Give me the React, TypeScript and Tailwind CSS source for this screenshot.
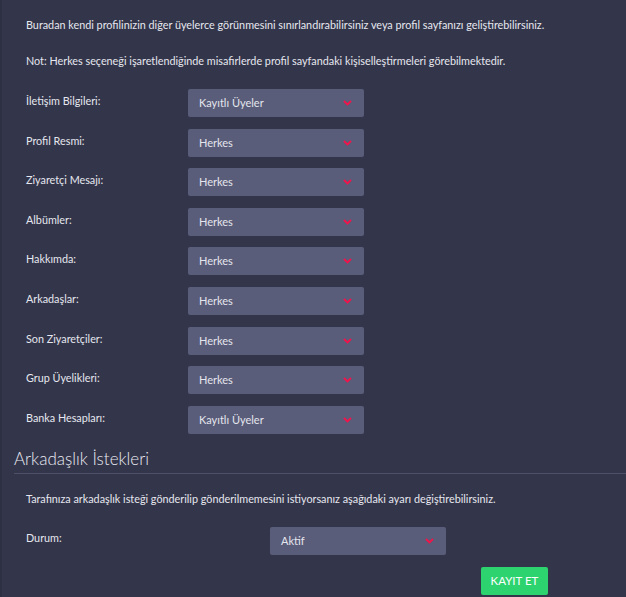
import { useState } from 'react';

const privacyRows = [
  { label: 'İletişim Bilgileri:', value: 'Kayıtlı Üyeler' },
  { label: 'Profil Resmi:', value: 'Herkes' },
  { label: 'Ziyaretçi Mesajı:', value: 'Herkes' },
  { label: 'Albümler:', value: 'Herkes' },
  { label: 'Hakkımda:', value: 'Herkes' },
  { label: 'Arkadaşlar:', value: 'Herkes' },
  { label: 'Son Ziyaretçiler:', value: 'Herkes' },
  { label: 'Grup Üyelikleri:', value: 'Herkes' },
  { label: 'Banka Hesapları:', value: 'Kayıtlı Üyeler' },
];

function Chevron() {
  return (
    <svg width="9" height="6" viewBox="0 0 9 6" className="shrink-0">
      <polyline points="1,1 4.5,4.5 8,1" fill="none" stroke="#f2134a" strokeWidth="1.8" />
    </svg>
  );
}

function SelectBox({ value }: { value: string }) {
  return (
    <button
      type="button"
      className="flex h-[28px] w-[176px] items-center justify-between rounded-[2px] bg-[#5a5d79] pl-[11px] pr-[12px] text-[11px] text-[#e4e5ee]"
    >
      <span>{value}</span>
      <Chevron />
    </button>
  );
}

export default function App() {
  const [saved, setSaved] = useState(false);

  return (
    <div
      className="min-h-screen border-l-2 border-[#2d2f42] bg-[#33354a] text-[10.8px] leading-[16px] text-[#e6e7ef]"
      style={{ fontFamily: 'Lato, "Open Sans", sans-serif' }}
    >
      <div className="pl-[24px] pt-[17px]">
        <p>
          Buradan kendi profilinizin diğer üyelerce görünmesini sınırlandırabilirsiniz veya profil sayfanızı geliştirebilirsiniz.
        </p>
        <p className="mt-[20px]">
          Not: Herkes seçeneği işaretlendiğinde misafirlerde profil sayfandaki kişiselleştirmeleri görebilmektedir.
        </p>

        <div className="mt-[20px] flex flex-col gap-[11.6px]">
          {privacyRows.map((row) => (
            <div key={row.label} className="flex items-start">
              <span className="w-[162px] pt-[4px]">{row.label}</span>
              <SelectBox value={row.value} />
            </div>
          ))}
        </div>
      </div>

      <div className="ml-[12px] mt-[13px] border-b border-[#4e5068] pb-[2px]">
        <h2 className="text-[17px] font-light leading-[24px] text-[#e9eaf2]">Arkadaşlık İstekleri</h2>
      </div>

      <div className="pl-[24px]">
        <p className="mt-[17px]">
          Tarafınıza arkadaşlık isteği gönderilip gönderilmemesini istiyorsanız aşağıdaki ayarı değiştirebilirsiniz.
        </p>

        <div className="mt-[20px] flex items-start">
          <span className="w-[244px] pt-[3px]">Durum:</span>
          <SelectBox value="Aktif" />
        </div>

        <div className="mt-[12px] flex pl-[455px]">
          <button
            type="button"
            onClick={() => setSaved(!saved)}
            className="h-[28px] w-[67px] rounded-[2px] bg-[#2dd36f] text-[11.5px] text-white"
          >
            KAYIT ET
          </button>
        </div>
      </div>
    </div>
  );
}
